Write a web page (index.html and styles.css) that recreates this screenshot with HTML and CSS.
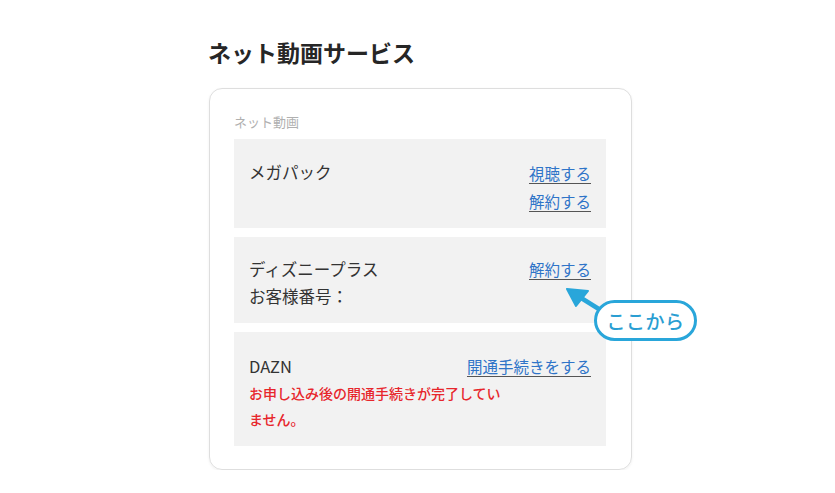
FILE: index.html
```html
<!DOCTYPE html>
<html lang="ja">
<head>
<meta charset="utf-8">
<link rel="stylesheet" href="styles.css">
</head>
<body>
<div class="page">
  <h1 class="title">ネット動画サービス</h1>
  <div class="card-wrap">
    <div class="card">
      <div class="label">ネット動画</div>
      <div class="row row1">
        <div class="name">メガパック</div>
        <div class="links">
          <a class="link" href="#">視聴する</a>
          <a class="link" href="#">解約する</a>
        </div>
      </div>
      <div class="row row2">
        <div class="name">ディズニープラス<br>お客様番号：</div>
        <div class="links">
          <a class="link" href="#">解約する</a>
        </div>
      </div>
      <div class="row row3">
        <div class="row3-top">
          <div class="name">DAZN</div>
          <a class="link" href="#">開通手続きをする</a>
        </div>
        <p class="warn">お申し込み後の開通手続きが完了していません。</p>
      </div>
    </div>
    <svg class="arrow" width="50" height="34" viewBox="0 0 50 34">
      <line x1="42" y1="28" x2="18" y2="13" stroke="#29a6da" stroke-width="4.5" stroke-linecap="round"/>
      <polygon points="7,6 28,8 16,23" fill="#29a6da" stroke="#29a6da" stroke-width="2" stroke-linejoin="round"/>
    </svg>
    <div class="callout">ここから</div>
  </div>
</div>
</body>
</html>
```
FILE: styles.css
```css
* { box-sizing: border-box; }
html, body { margin: 0; padding: 0; background: #fff; }
body {
  font-family: "Noto Sans CJK JP", "Noto Sans", sans-serif;
  color: #333;
}
.page {
  margin-left: 208px;
  width: 425px;
  padding-top: 36px;
}
.title {
  margin: 0 0 20px 0;
  font-size: 23px;
  line-height: 32px;
  font-weight: 700;
  color: #262626;
  letter-spacing: 0;
}
.card-wrap {
  position: relative;
  margin-left: 1px;
}
.card {
  width: 423px;
  height: 382px;
  border: 1.5px solid #dedede;
  border-radius: 13px;
  box-shadow: 0 1px 3px rgba(0,0,0,0.06);
  padding: 24px 25px 23px 24px;
  display: flex;
  flex-direction: column;
  gap: 9px;
}
.label {
  font-size: 13px;
  line-height: 18px;
  color: #b0b0b0;
  margin-bottom: -1px;
}
.row {
  background: #f2f2f2;
  padding: 20px 15px 0 15px;
}
.row1, .row2 {
  display: flex;
  justify-content: space-between;
  align-items: flex-start;
}
.row1 { height: 89px; }
.row2 { height: 86px; }
.row3 { height: 114px; }
.name {
  font-size: 16.5px;
  line-height: 27px;
  color: #333;
}
.links {
  display: flex;
  flex-direction: column;
  align-items: flex-end;
}
.link {
  font-size: 15.5px;
  line-height: 28px;
  color: #2f74c8;
  text-decoration: underline;
  text-decoration-color: #555;
  text-underline-offset: 3px;
}
.row2 .name { margin-top: -1px; }
.row2 .link { margin-top: -2px; }
.row3-top {
  display: flex;
  justify-content: space-between;
  align-items: center;
  height: 28px;
}
.warn {
  margin: 0;
  width: 258px;
  font-size: 14px;
  font-weight: 500;
  line-height: 26px;
  color: #e7262c;
}
.arrow {
  position: absolute;
  left: 351px;
  top: 195px;
}
.callout {
  position: absolute;
  left: 385px;
  top: 212px;
  width: 103px;
  height: 41px;
  border: 3px solid #29a6da;
  border-radius: 21px;
  background: #fff;
  color: #2a9ed2;
  font-size: 19px;
  font-weight: 500;
  line-height: 35px;
  text-align: center;
  letter-spacing: 0.5px;
}
```
